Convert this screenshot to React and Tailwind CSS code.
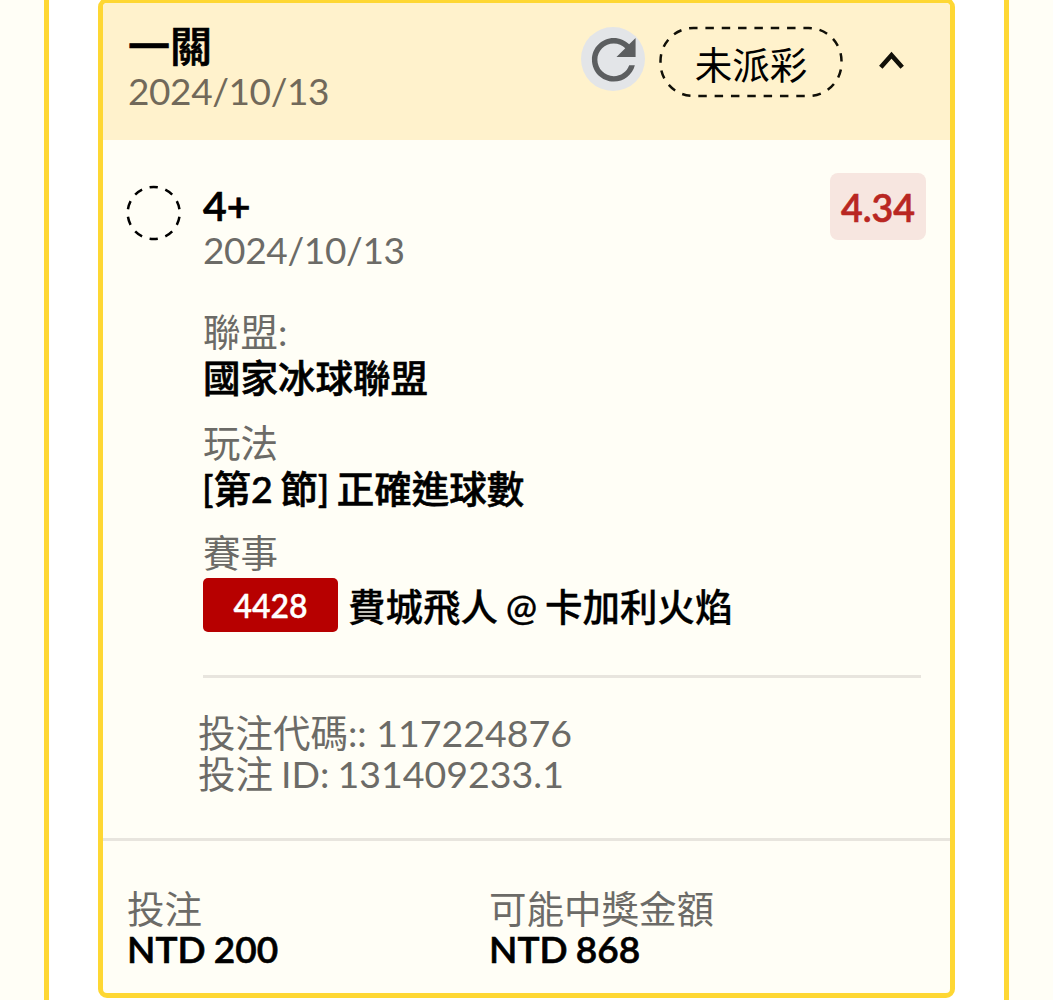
const font = "font-['Lato','Noto_Sans_CJK_TC',sans-serif]";

function T({ children, className }) {
  return <div className={"whitespace-nowrap " + className}>{children}</div>;
}

export default function App() {
  return (
    <div className={"flex h-[1000px] w-[1053px] overflow-hidden bg-[#fffef6] pl-[44px] " + font}>
      <div className="h-full w-[965px] border-x-[5px] border-[#fed733] bg-white pl-[49px]">
        <div className="-mt-[2px] h-[1000px] w-[857px] overflow-hidden rounded-[9px] border-[5px] border-[#fed733] bg-[#fffef6] text-black">
          <header className="flex h-[137px] bg-[#fff2cc] pl-[25px]">
            <div className="w-[453px] pt-[20px]">
              <T className="h-[46px] text-[42px] leading-[46px] font-medium [-webkit-text-stroke:0.7px_black]">一關</T>
              <T className="-mt-px text-[37px] leading-[46px] tracking-[-0.4px] text-[#71695a]">2024/10/13</T>
            </div>
            <div className="mt-[24px] size-[64px] shrink-0 rounded-full bg-[#e3e5e8]">
              <svg className="-mt-[0.5px] -ml-[0.5px]" width="65.5" height="65.5" viewBox="0 0 24 24" fill="#5c5e60">
                <path d="M17.65 6.35C16.2 4.9 14.21 4 12 4c-4.42 0-7.99 3.58-7.99 8s3.57 8 7.99 8c3.73 0 6.84-2.55 7.73-6h-2.08c-.82 2.33-3.04 4-5.65 4-3.31 0-6-2.69-6-6s2.69-6 6-6c1.66 0 3.14.69 4.22 1.78L13 11h7V4l-2.35 2.35z" />
              </svg>
            </div>
            <div className="relative mt-[23px] ml-[14px] flex h-[72px] w-[184px] shrink-0 justify-center text-[37.5px] leading-[77px]">
              <svg className="absolute inset-0" width="184" height="72" fill="none" stroke="#111008" strokeWidth="2.5">
                <rect x="1.5" y="2" width="181" height="68" rx="33" pathLength="448.2" strokeDasharray="8.6 8" strokeDashoffset="4.5" />
              </svg>
              未派彩
            </div>
            <svg className="mt-[46px] ml-[35px] shrink-0" width="28" height="22" fill="none" stroke="#111008" strokeWidth="4.6"><path d="M2.8 18.2L13.5 6.3L24.2 18.2" /></svg>
          </header>
          <main className="flex h-[698px] pl-[23px]">
            <svg className="mt-[45px] shrink-0" width="56" height="56" fill="none" stroke="#000" strokeWidth="2.5"><circle cx="27.7" cy="28" r="26" pathLength="163" strokeDasharray="8.5 7.8" strokeDashoffset="-3.9" /></svg>
            <section className="ml-[21px] w-[718px] shrink-0 pt-[42px]">
              <T className="h-[46px] pt-px text-[41px] leading-[46px] font-semibold [-webkit-text-stroke:0.7px_black]">4+</T>
              <T className="-mt-px h-[46px] text-[37px] leading-[46px] tracking-[-0.35px] text-[#6c6b67]">2024/10/13</T>
              <T className="mt-[36px] h-[46px] text-[37.5px] leading-[46px] text-[#6c6b67]">聯盟:</T>
              <T className="h-[46px] text-[37.5px] leading-[46px] font-medium [-webkit-text-stroke:0.6px_black]">國家冰球聯盟</T>
              <T className="mt-[19px] h-[46px] text-[37.5px] leading-[46px] text-[#6c6b67]">玩法</T>
              <T className="-ml-px h-[46px] text-[37.5px] leading-[46px] font-medium [word-spacing:-2px] [-webkit-text-stroke:0.6px_black]">[第2 節] 正確進球數</T>
              <T className="mt-[18px] h-[46px] text-[37.5px] leading-[46px] text-[#6c6b67]">賽事</T>
              <div className="mt-[2px] flex h-[54px] items-center">
                <span className="flex h-[54px] w-[135px] items-center justify-center rounded-[5px] bg-[#b70000] pt-px text-[32px] font-semibold text-white [-webkit-text-stroke:0.3px_white]">4428</span>
                <T className="ml-[10px] pt-[4px] text-[37.5px] font-medium [word-spacing:-1.7px] [-webkit-text-stroke:0.3px_black]">費城飛人 @ 卡加利火焰</T>
              </div>
              <div className="mt-[43px] h-[3px] bg-[#e8e5de]" />
              <div className="-ml-[5px] pt-[34px] text-[37.5px] leading-[41px] text-[#6c6b67]">
                <T>投注代碼:: 117224876</T>
                <T className="[word-spacing:-1.5px]">投注 ID: 131409233.1</T>
              </div>
            </section>
            <span className="mt-[33px] -ml-[91px] flex h-[67px] w-[96px] shrink-0 items-center justify-center rounded-[8px] bg-[#f7e6e0] pt-[3px] text-[37.5px] font-semibold text-[#b92722] [-webkit-text-stroke:0.6px_#b92722]">4.34</span>
          </main>
          <footer className="flex h-[155px] border-t-[3px] border-[#e8e5de] pt-[48px] pl-[25px] text-[37.5px] leading-[40px]">
            <div className="w-[361px]"><T className="-ml-px text-[#6c6b67]">投注</T><T className="-ml-px text-[37px] font-semibold [word-spacing:-1px] [-webkit-text-stroke:0.6px_black]">NTD 200</T></div>
            <div><T className="text-[#6c6b67]">可能中獎金額</T><T className="text-[37px] font-semibold [word-spacing:-1px] [-webkit-text-stroke:0.6px_black]">NTD 868</T></div>
          </footer>
        </div>
      </div>
    </div>
  );
}
